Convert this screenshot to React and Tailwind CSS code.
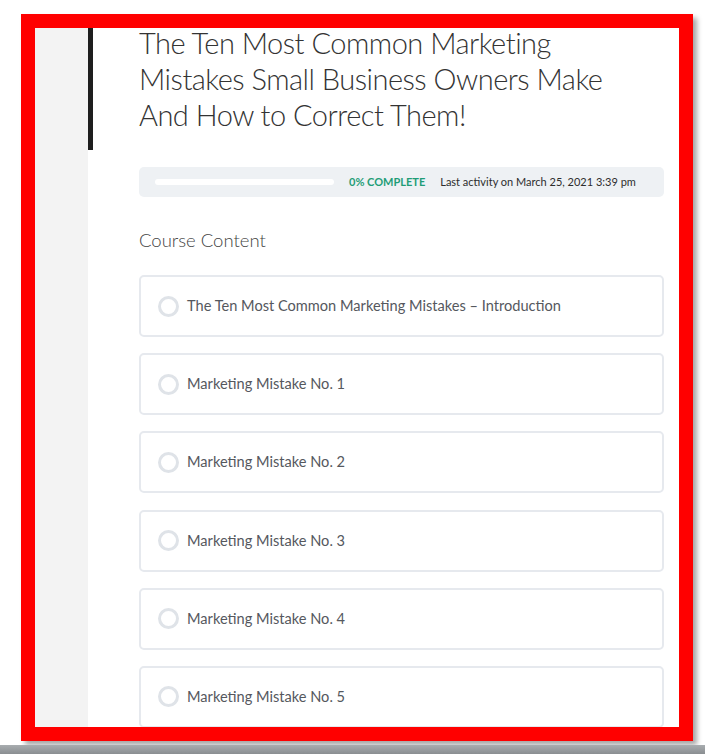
import React from 'react';

const lessons = [
  'The Ten Most Common Marketing Mistakes – Introduction',
  'Marketing Mistake No. 1',
  'Marketing Mistake No. 2',
  'Marketing Mistake No. 3',
  'Marketing Mistake No. 4',
  'Marketing Mistake No. 5',
];

const LessonRow = ({ title }) => (
  <div className="h-[62px] shrink-0 border-2 border-[#e6e9ee] rounded-[5px] flex items-center pl-[17px] bg-white">
    <span className="w-[21px] h-[21px] rounded-full border-[3px] border-[#dfe3e8] shrink-0" />
    <span className="ml-[8px] text-[14.6px] text-[#55585e] font-['Lato',sans-serif]">{title}</span>
  </div>
);

const App = () => {
  return (
    <div className="w-[705px] h-[754px] bg-white overflow-hidden">
      {/* red frame */}
      <div className="ml-[21px] mt-[14px] w-[672px] h-[727px] border-[14px] border-[#ff0000] shadow-[4px_4px_5px_rgba(0,0,0,0.35)] flex overflow-hidden">
        <div className="w-[53px] bg-[#f3f3f3] shrink-0" />
        <div className="flex-1 flex items-start bg-white">
          <div className="w-[5px] h-[122px] bg-[#1e1e1e] shrink-0" />
          <div className="flex-1 pl-[46px] pr-[15px] flex flex-col">
            <h1 className="text-[29px] leading-[36px] tracking-[-0.5px] font-light text-[#333] font-['Lato',sans-serif] -mt-[3px]">
              The Ten Most Common Marketing
              <br />
              Mistakes Small Business Owners Make
              <br />
              And How to Correct Them!
            </h1>

            {/* progress */}
            <div className="mt-[34px] h-[30px] rounded-[5px] bg-[#eef1f4] flex items-center px-[16px] font-['Lato',sans-serif]">
              <div className="w-[179px] h-[6px] rounded-full bg-white" />
              <span className="ml-[15px] text-[11px] font-bold text-[#1f9d77]">0% COMPLETE</span>
              <span className="ml-[15px] text-[11px] text-[#2d2d2d]">Last activity on March 25, 2021 3:39 pm</span>
            </div>

            <h2 className="mt-[31px] text-[18.5px] leading-[24px] font-light text-[#444] font-['Lato',sans-serif]">
              Course Content
            </h2>

            <div className="mt-[23px] flex flex-col gap-[16.2px]">
              {lessons.map((l) => (
                <LessonRow key={l} title={l} />
              ))}
            </div>
          </div>
        </div>
      </div>
      {/* bottom bar */}
      <div className="mt-[4px] h-[9px] bg-gradient-to-b from-[#a9adb0] to-[#8a8e91]" />
    </div>
  );
};

export default App;
